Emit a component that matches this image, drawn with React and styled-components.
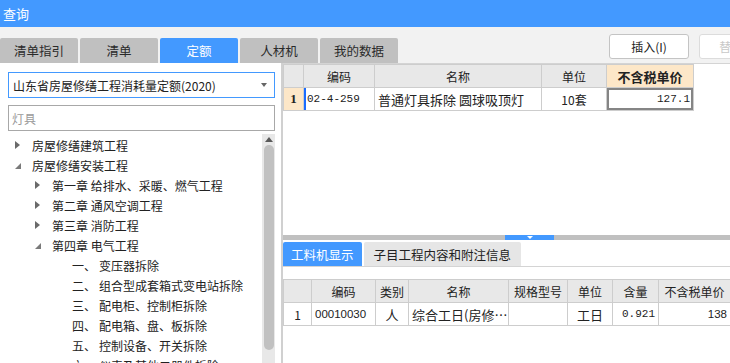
import React from "react";
import styled, { createGlobalStyle, css } from "styled-components";

const GlobalStyle = createGlobalStyle`
  html, body {
    margin: 0;
    padding: 0;
    background: #ffffff;
  }
  body {
    font-family: "Noto Sans CJK SC", "Noto Sans", sans-serif;
  }
  * {
    box-sizing: border-box;
  }
`;

const tree = [
  { level: 0, arrow: "closed", text: "房屋修缮建筑工程" },
  { level: 0, arrow: "open", text: "房屋修缮安装工程" },
  { level: 1, arrow: "closed", text: "第一章 给排水、采暖、燃气工程" },
  { level: 1, arrow: "closed", text: "第二章 通风空调工程" },
  { level: 1, arrow: "closed", text: "第三章 消防工程" },
  { level: 1, arrow: "open", text: "第四章 电气工程" },
  { level: 2, num: "一、", text: "变压器拆除" },
  { level: 2, num: "二、", text: "组合型成套箱式变电站拆除" },
  { level: 2, num: "三、", text: "配电柜、控制柜拆除" },
  { level: 2, num: "四、", text: "配电箱、盘、板拆除" },
  { level: 2, num: "五、", text: "控制设备、开关拆除" },
  { level: 2, num: "六、", text: "仪表及其他二器件拆除" },
];

const tabs = ["清单指引", "清单", "定额", "人材机", "我的数据"];

function App() {
  return (
    <>
      <GlobalStyle />
      <Window>
        <TitleBar>查询</TitleBar>
        <Toolbar>
          <Tabs>
            {tabs.map((t) => (
              <Tab key={t} $active={t === "定额"}>
                {t}
              </Tab>
            ))}
          </Tabs>
          <ButtonGroup>
            <Button>插入(I)</Button>
            <Button $disabled>替换(R)</Button>
          </ButtonGroup>
        </Toolbar>
        <Body>
          <LeftPanel>
            <SelectBox>
              <span>山东省房屋修缮工程消耗量定额(2020)</span>
              <SelectCaret />
            </SelectBox>
            <SearchBox placeholder="灯具" />
            <TreeArea>
              <TreeList>
                {tree.map((n, i) => (
                  <TreeRow key={i} $level={n.level}>
                    <ArrowSlot>
                      {n.arrow === "closed" && <ClosedArrow />}
                      {n.arrow === "open" && <OpenArrow />}
                    </ArrowSlot>
                    {n.num && <Num>{n.num}</Num>}
                    <span>{n.text}</span>
                  </TreeRow>
                ))}
              </TreeList>
              <Scrollbar>
                <ScrollUp />
                <Thumb />
              </Scrollbar>
            </TreeArea>
          </LeftPanel>
          <RightPanel>
            <TopPane>
              <Grid $width={410}>
                <colgroup>
                  <col style={{ width: 20 }} />
                  <col style={{ width: 71 }} />
                  <col style={{ width: 167 }} />
                  <col style={{ width: 65 }} />
                  <col style={{ width: 87 }} />
                </colgroup>
                <thead>
                  <tr>
                    <Th />
                    <Th>编码</Th>
                    <Th>名称</Th>
                    <Th>单位</Th>
                    <Th $peach $bold>
                      不含税单价
                    </Th>
                  </tr>
                </thead>
                <tbody>
                  <tr>
                    <RowNo $peach>1</RowNo>
                    <Td $mono $focus>
                      02-4-259
                    </Td>
                    <Td $big>普通灯具拆除 圆球吸顶灯</Td>
                    <Td $center>10套</Td>
                    <Td $mono $right $selected>
                      127.1
                    </Td>
                  </tr>
                </tbody>
              </Grid>
            </TopPane>
            <Splitter>
              <Grip>
                <GripArrow />
              </Grip>
            </Splitter>
            <BottomPane>
              <SubTabs>
                <SubTab $active>工料机显示</SubTab>
                <SubTab>子目工程内容和附注信息</SubTab>
              </SubTabs>
              <Grid $width={447} $gap>
                <colgroup>
                  <col style={{ width: 28 }} />
                  <col style={{ width: 64 }} />
                  <col style={{ width: 33 }} />
                  <col style={{ width: 100 }} />
                  <col style={{ width: 59 }} />
                  <col style={{ width: 45 }} />
                  <col style={{ width: 46 }} />
                  <col style={{ width: 72 }} />
                </colgroup>
                <thead>
                  <tr>
                    <Th />
                    <Th>编码</Th>
                    <Th>类别</Th>
                    <Th>名称</Th>
                    <Th>规格型号</Th>
                    <Th>单位</Th>
                    <Th>含量</Th>
                    <Th>不含税单价</Th>
                  </tr>
                </thead>
                <tbody>
                  <tr>
                    <Td $center>1</Td>
                    <Td $digits>00010030</Td>
                    <Td $center $big>
                      人
                    </Td>
                    <Td $big>综合工日(房修…</Td>
                    <Td />
                    <Td $center $big>
                      工日
                    </Td>
                    <Td $mono $right>
                      0.921
                    </Td>
                    <Td $digits $right>
                      138
                    </Td>
                  </tr>
                </tbody>
              </Grid>
            </BottomPane>
          </RightPanel>
        </Body>
      </Window>
    </>
  );
}

export default App;

const blue = "#4399ff";

const Window = styled.div`
  width: 730px;
  height: 363px;
  display: flex;
  flex-direction: column;
  overflow: hidden;
  background: #f2f2f2;
  color: #222;
`;

const TitleBar = styled.div`
  height: 27px;
  flex-shrink: 0;
  background: ${blue};
  color: #fff;
  font-size: 13px;
  padding-left: 3px;
  display: flex;
  align-items: center;
`;

const Toolbar = styled.div`
  height: 36px;
  flex-shrink: 0;
  display: flex;
  align-items: flex-end;
  overflow: hidden;
`;

const Tabs = styled.div`
  display: flex;
  gap: 2px;
`;

const Tab = styled.div`
  width: 78px;
  height: 25px;
  border-radius: 2px 2px 0 0;
  background: ${(p) => (p.$active ? blue : "#c0c0c0")};
  color: ${(p) => (p.$active ? "#fff" : "#2a2a2a")};
  font-size: 12.5px;
  display: flex;
  align-items: center;
  justify-content: center;
`;

const ButtonGroup = styled.div`
  margin-left: auto;
  width: 121px;
  align-self: flex-start;
  margin-top: 7px;
  display: flex;
  gap: 10px;
  overflow: hidden;
`;

const Button = styled.div`
  flex-shrink: 0;
  width: 80px;
  height: 25px;
  border: 1px solid ${(p) => (p.$disabled ? "#dcdcdc" : "#c4c4c4")};
  border-radius: 3px;
  background: #fff;
  font-size: 12px;
  color: ${(p) => (p.$disabled ? "#c8c8c8" : "#222")};
  display: flex;
  align-items: center;
  justify-content: center;
`;

const Body = styled.div`
  flex: 1;
  min-height: 0;
  display: flex;
`;

const LeftPanel = styled.div`
  width: 281px;
  flex-shrink: 0;
  background: #fff;
  padding: 9px 0 0 8px;
  display: flex;
  flex-direction: column;
  min-height: 0;
`;

const SelectBox = styled.div`
  width: 267px;
  height: 26px;
  border: 1px solid ${blue};
  font-size: 12px;
  color: #222;
  padding: 0 7px 0 4px;
  display: flex;
  align-items: center;
  justify-content: space-between;
`;

const SelectCaret = styled.span`
  width: 0;
  height: 0;
  border-left: 3.5px solid transparent;
  border-right: 3.5px solid transparent;
  border-top: 4px solid #666;
`;

const SearchBox = styled.input`
  width: 267px;
  height: 26px;
  margin-top: 7px;
  border: 1px solid #a8a8a8;
  padding: 0 3px;
  font-family: "Noto Sans CJK SC", sans-serif;
  font-size: 12px;
  outline: none;
  &::placeholder {
    color: #9a9a9a;
  }
`;

const TreeArea = styled.div`
  flex: 1;
  min-height: 0;
  margin-top: 3px;
  display: flex;
  overflow: hidden;
`;

const TreeList = styled.div`
  width: 254px;
  padding-top: 1px;
`;

const TreeRow = styled.div`
  height: 20px;
  display: flex;
  align-items: center;
  white-space: nowrap;
  font-size: 12px;
  color: #222;
  padding-left: ${(p) => 7 + p.$level * 20}px;
`;

const ArrowSlot = styled.span`
  width: 17px;
  flex-shrink: 0;
  display: flex;
  align-items: center;
`;

const ClosedArrow = styled.span`
  width: 0;
  height: 0;
  border-top: 4px solid transparent;
  border-bottom: 4px solid transparent;
  border-left: 5px solid #6a6a6a;
`;

const OpenArrow = styled.span`
  width: 0;
  height: 0;
  margin-top: 2px;
  border-left: 6px solid transparent;
  border-bottom: 6px solid #7a7a7a;
`;

const Num = styled.span`
  width: 27px;
  flex-shrink: 0;
`;

const Scrollbar = styled.div`
  width: 13px;
  flex-shrink: 0;
  margin-right: 6px;
  background: #e8e8e8;
  display: flex;
  flex-direction: column;
  align-items: center;
  padding-top: 3px;
`;

const ScrollUp = styled.span`
  width: 0;
  height: 0;
  border-left: 4.5px solid transparent;
  border-right: 4.5px solid transparent;
  border-bottom: 5px solid #5a5a5a;
`;

const Thumb = styled.div`
  margin-top: 3px;
  width: 10px;
  height: 205px;
  border-radius: 5px;
  background: #c1c1c1;
`;

const RightPanel = styled.div`
  flex: 1;
  min-width: 0;
  display: flex;
  flex-direction: column;
  border-left: 2px solid #d0d0d0;
  background: #fff;
`;

const TopPane = styled.div`
  height: 172px;
  flex-shrink: 0;
  border-top: 1px solid #d4d4d4;
`;

const Splitter = styled.div`
  height: 5px;
  flex-shrink: 0;
  background: #c0c0c0;
  display: flex;
`;

const Grip = styled.div`
  margin-left: 222px;
  width: 49px;
  height: 100%;
  background: ${blue};
  display: flex;
  justify-content: center;
  padding-top: 1px;
`;

const GripArrow = styled.span`
  width: 0;
  height: 0;
  border-left: 3px solid transparent;
  border-right: 3px solid transparent;
  border-top: 3px solid #fff;
`;

const BottomPane = styled.div`
  flex: 1;
  min-height: 0;
  padding-top: 2px;
`;

const SubTabs = styled.div`
  display: flex;
  gap: 2px;
  border-bottom: 1px solid #d4d4d4;
`;

const SubTab = styled.div`
  height: 24px;
  padding: 0 ${(p) => (p.$active ? 8 : 10)}px;
  border-radius: 2px 2px 0 0;
  background: ${(p) => (p.$active ? blue : "#e6e6e6")};
  color: ${(p) => (p.$active ? "#fff" : "#222")};
  font-size: 12.5px;
  display: flex;
  align-items: center;
`;

const Grid = styled.table`
  width: ${(p) => p.$width}px;
  table-layout: fixed;
  border-collapse: collapse;
  margin-top: ${(p) => (p.$gap ? 12 : 0)}px;
  font-size: 12px;
  color: #222;
`;

const cellBase = css`
  border: 1px solid #cdcdcd;
  padding: 0 3px;
  white-space: nowrap;
  overflow: hidden;
  height: 23px;
`;

const Th = styled.th`
  ${cellBase}
  background: ${(p) => (p.$peach ? "#fde7c8" : "#e8e8e8")};
  font-weight: ${(p) => (p.$bold ? 700 : 400)};
  font-size: ${(p) => (p.$bold ? 13 : 12)}px;
  text-align: center;
`;

const RowNo = styled.td`
  ${cellBase}
  background: #fde7c8;
  text-align: center;
  font-family: "Liberation Serif", serif;
  font-weight: 700;
  font-size: 13px;
  padding: 0;
`;

const Td = styled.td`
  ${cellBase}
  text-align: ${(p) => (p.$right ? "right" : p.$center ? "center" : "left")};
  font-size: ${(p) => (p.$big ? 13 : 12)}px;
  ${(p) =>
    p.$mono &&
    css`
      font-family: "Liberation Mono", monospace;
      font-size: 11px;
    `}
  ${(p) =>
    p.$digits &&
    css`
      font-family: "Liberation Sans", sans-serif;
      font-size: 11.5px;
    `}
  ${(p) => p.$focus && "box-shadow: inset 2px 0 0 #1b6cff;"}
  ${(p) => p.$selected && "box-shadow: inset 0 0 0 2px #858585;"}
`;
